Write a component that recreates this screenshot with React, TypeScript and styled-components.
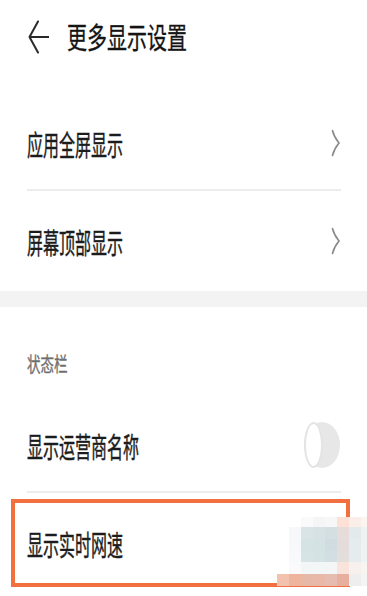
import {createGlobalStyle, styled} from 'styled-components';

const GlobalStyle = createGlobalStyle`
	html, body {
		margin: 0;
		padding: 0;
		background: #ffffff;
	}
	body {
		font-family: "Noto Sans CJK SC", "Noto Sans", sans-serif;
		color: #1c1c1c;
	}
`;

const Page = styled.div`
	width: 367px;
	height: 596px;
	overflow: hidden;
	display: flex;
	flex-direction: column;
	background: #fff;
`;

const Header = styled.header`
	height: 74px;
	display: flex;
	align-items: center;
	gap: 18px;
	padding-left: 28px;
	box-sizing: border-box;
`;

const Text = styled.span<{$size: number; $stretch: number; $color?: string}>`
	display: inline-block;
	font-size: ${(p) => p.$size}px;
	font-weight: 400;
	line-height: 1;
	color: ${(p) => p.$color ?? '#1c1c1c'};
	-webkit-text-stroke: 0.25px ${(p) => p.$color ?? '#1c1c1c'};
	transform: scaleY(${(p) => p.$stretch});
	transform-origin: center;
	white-space: nowrap;
`;

const Section = styled.section<{$padTop?: number}>`
	display: flex;
	flex-direction: column;
	padding-top: ${(p) => p.$padTop ?? 0}px;
`;

const Row = styled.div<{$height: number; $divider?: boolean}>`
	height: ${(p) => p.$height}px;
	margin: 0 26px 0 27px;
	display: flex;
	align-items: center;
	justify-content: space-between;
	box-sizing: border-box;
	border-bottom: ${(p) => (p.$divider ? '2px solid #ececec' : 'none')};
`;

const Band = styled.div`
	height: 16px;
	background: #f3f3f3;
`;

const SubHeader = styled.div`
	height: 92px;
	padding: 43px 0 0 27px;
	box-sizing: border-box;
`;

const Highlight = styled.div`
	position: relative;
	margin: 6px 17px 0 11px;
	height: 88px;
	border: 4px solid #f2703f;
	box-sizing: border-box;
	display: flex;
	align-items: center;
	padding-left: 12px;
`;

const Switch = styled.div`
	width: 36px;
	height: 46px;
	border-radius: 18px / 23px;
	background: #e7e7e7;
	display: flex;
	align-items: stretch;
	margin-right: 1px;
`;

const Knob = styled.div`
	width: 19px;
	border-radius: 50%;
	background: #ffffff;
	border: 2px solid #e4e4e4;
	box-sizing: border-box;
`;

const Mosaic = styled.div`
	position: absolute;
	left: 262px;
	top: 14px;
	display: grid;
	grid-template-columns: repeat(7, 12px) 6px;
	grid-template-rows: 10px 12px 12px 11px 12px 12px;
`;

const Cell = styled.div<{$c: string}>`
	background: ${(p) => p.$c};
`;

const mosaic = [
	['transparent', '#ffffff', '#fafafa', '#f5f5f5', '#f7f7f7', '#fde0d6', '#fbeee8', '#fbf4f0'],
	['transparent', '#f6f8f9', '#d8e4e6', '#d6e2e4', '#d3dfe1', '#e6dcda', '#e4eaec', '#eef2f3'],
	['transparent', '#f6f8f9', '#d6e3e5', '#d5e2e4', '#d0dcdf', '#e3dcda', '#e6ecee', '#eef2f3'],
	['transparent', '#f7f9fa', '#d7e4e6', '#d4e2e4', '#d2dee1', '#e2dedc', '#e6ecee', '#eef2f3'],
	['transparent', '#fafafa', '#f2f6f7', '#f2f6f7', '#f3f5f6', '#f8e4db', '#f7f0ed', '#f8f4f2'],
	['#f2c2ae', '#efb49e', '#e6b8a8', '#e8b8a8', '#e5bcaf', '#e7b09e', '#eeeeee', '#f4f4f4'],
];

function BackArrow() {
	return (
		<svg width="21" height="34" viewBox="0 0 21 34" fill="none">
			<path
				d="M10 1.5 L1.5 17 L10 32.5 M1.5 17 H20.5"
				stroke="#2a2a2a"
				strokeWidth="2"
				strokeLinecap="round"
				strokeLinejoin="round"
			/>
		</svg>
	);
}

function Chevron() {
	return (
		<svg width="10" height="28" viewBox="0 0 10 28" fill="none">
			<path
				d="M1.5 1.5 Q3 8 8 14 Q3 20 1.5 26.5"
				stroke="#8a8a8a"
				strokeWidth="1.6"
				strokeLinecap="round"
			/>
		</svg>
	);
}

export default function App() {
	return (
		<>
			<GlobalStyle />
			<Page>
				<Header>
					<BackArrow />
					<Text $size={20} $stretch={1.45} $color="#141414">
						更多显示设置
					</Text>
				</Header>

				<Section $padTop={22}>
					<Row $height={95} $divider>
						<Text $size={16} $stretch={1.8}>
							应用全屏显示
						</Text>
						<Chevron />
					</Row>
					<Row $height={100}>
						<Text $size={16} $stretch={1.8}>
							屏幕顶部显示
						</Text>
						<Chevron />
					</Row>
				</Section>

				<Band />

				<Section>
					<SubHeader>
						<Text $size={13.5} $stretch={1.5} $color="#6f6f6f">
							状态栏
						</Text>
					</SubHeader>
					<Row $height={94} $divider>
						<Text $size={16} $stretch={1.8}>
							显示运营商名称
						</Text>
						<Switch>
							<Knob />
						</Switch>
					</Row>
					<Highlight>
						<Text $size={16} $stretch={1.8}>
							显示实时网速
						</Text>
						<Mosaic>
							{mosaic.flatMap((row, r) =>
								row.map((c, i) => <Cell key={`${r}-${i}`} $c={c} />),
							)}
						</Mosaic>
					</Highlight>
				</Section>
			</Page>
		</>
	);
}
